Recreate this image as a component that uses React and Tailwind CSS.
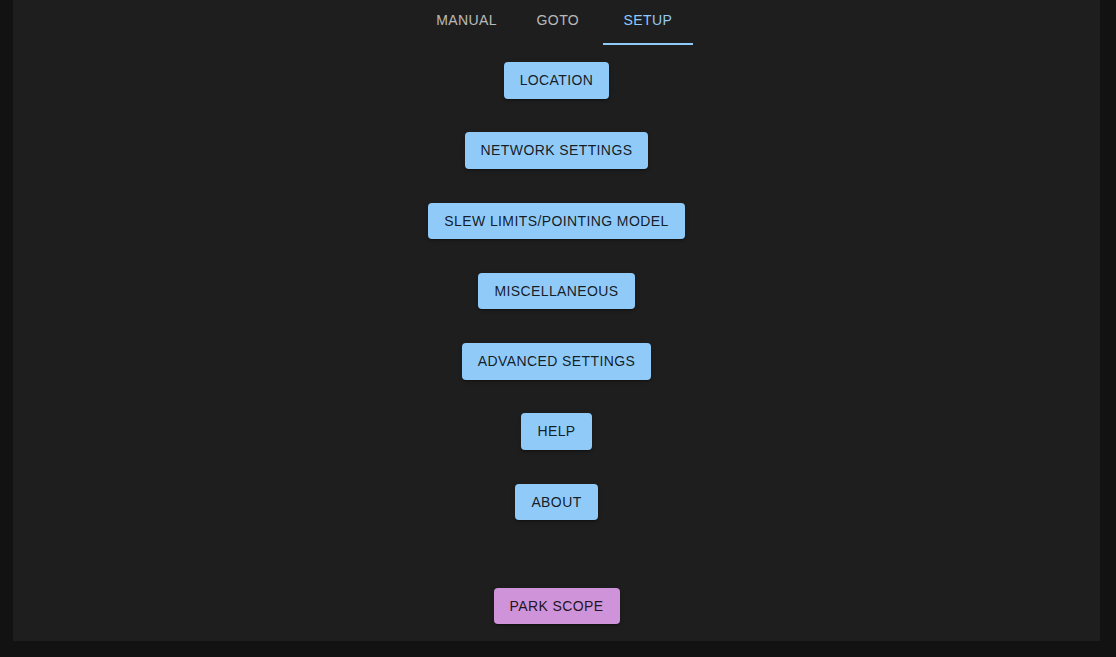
export default function App() {
  const items = [
    "LOCATION",
    "NETWORK SETTINGS",
    "SLEW LIMITS/POINTING MODEL",
    "MISCELLANEOUS",
    "ADVANCED SETTINGS",
    "HELP",
    "ABOUT",
  ];
  const tabs = ["MANUAL", "GOTO", "SETUP"];
  const btn =
    "rounded-[4px] px-4 py-[6px] text-[14px] font-medium leading-[24.5px] tracking-[0.4px] text-black/[0.87] shadow-[0_3px_1px_-2px_rgba(0,0,0,0.2),0_2px_2px_0_rgba(0,0,0,0.14),0_1px_5px_0_rgba(0,0,0,0.12)]";
  return (
    <div
      className="min-h-[657px] w-full bg-[#121212] pl-[13px] pr-[16px] pb-[16px]"
      style={{ fontFamily: "'Liberation Sans', Arial, sans-serif" }}
    >
      <div className="flex h-[641px] flex-col items-center bg-[#1e1e1e] pb-[17px]">
        <div className="flex">
          {tabs.map((t, i) => (
            <div
              key={t}
              className={`relative flex h-[45px] min-w-[90px] justify-center px-4 pt-[12px] text-[14px] font-medium leading-[17px] tracking-[0.4px] ${
                i === 2 ? "text-[#90caf9]" : "text-white/70"
              }`}
            >
              {t}
              {i === 2 && (
                <div className="absolute bottom-0 left-0 right-0 h-[2px] bg-[#90caf9]" />
              )}
            </div>
          ))}
        </div>
        <div className="mt-[17px] flex flex-col items-center gap-[33.8px]">
          {items.map((t) => (
            <button key={t} className={`${btn} bg-[#90caf9]`}>
              {t}
            </button>
          ))}
        </div>
        <div className="flex-1" />
        <button className={`${btn} bg-[#ce93d8]`}>PARK SCOPE</button>
      </div>
    </div>
  );
}
